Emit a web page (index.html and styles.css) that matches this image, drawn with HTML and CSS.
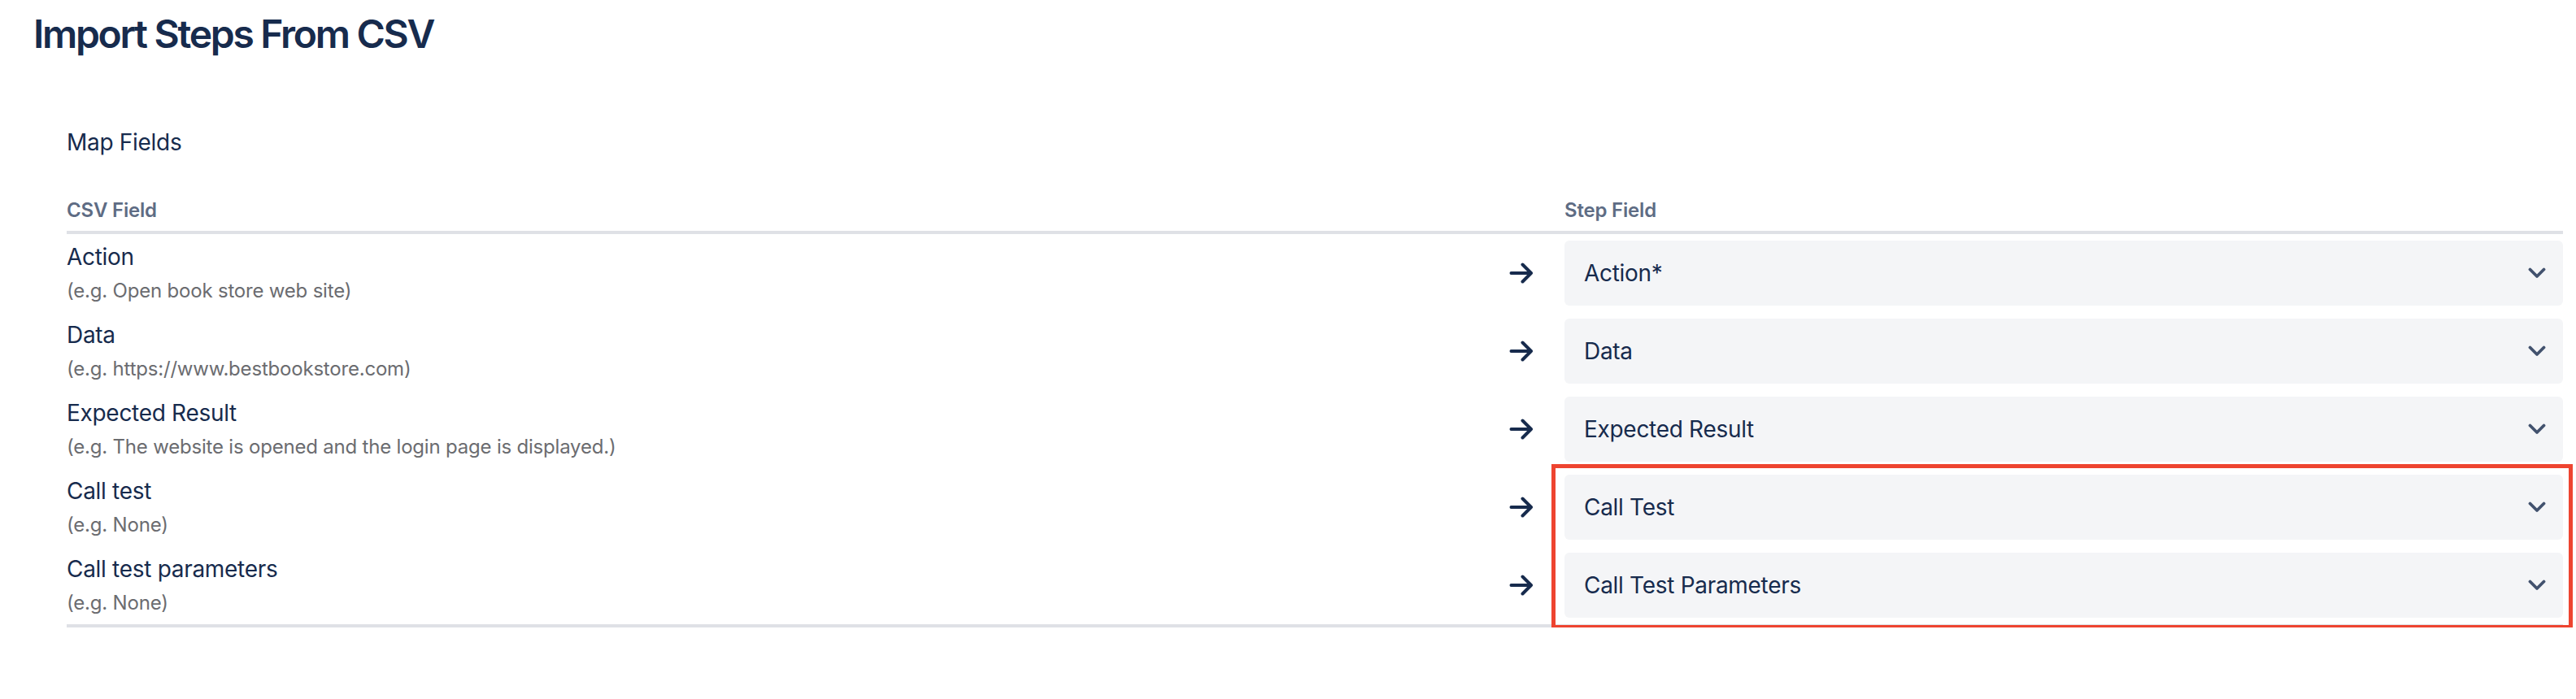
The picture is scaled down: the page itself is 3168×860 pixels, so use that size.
FILE: index.html
```html
<!DOCTYPE html>
<html lang="en">
<head>
<meta charset="utf-8">
<title>Import Steps From CSV</title>
<link rel="stylesheet" href="styles.css">
</head>
<body>
<div class="page">
  <h1 class="title">Import Steps From CSV</h1>
  <section class="mapping">
    <h2 class="section-title">Map Fields</h2>
    <div class="table">
      <div class="thead">
        <div class="th th-csv">CSV Field</div>
        <div class="th th-step">Step Field</div>
      </div>
      <div class="tbody">
        <div class="row">
          <div class="csv"><div class="label">Action</div><div class="hint">(e.g. Open book store web site)</div></div>
          <svg class="arrow" viewBox="0 0 30 26" width="30" height="26"><path d="M2.5 13H27M16.5 2.5L27 13L16.5 23.5"/></svg>
          <div class="select"><span class="value">Action*</span><svg class="chevron" viewBox="0 0 22 14" width="22" height="14"><path d="M2.5 2.5L11 11L19.5 2.5"/></svg></div>
        </div>
        <div class="row">
          <div class="csv"><div class="label">Data</div><div class="hint">(e.g. https://www.bestbookstore.com)</div></div>
          <svg class="arrow" viewBox="0 0 30 26" width="30" height="26"><path d="M2.5 13H27M16.5 2.5L27 13L16.5 23.5"/></svg>
          <div class="select"><span class="value">Data</span><svg class="chevron" viewBox="0 0 22 14" width="22" height="14"><path d="M2.5 2.5L11 11L19.5 2.5"/></svg></div>
        </div>
        <div class="row">
          <div class="csv"><div class="label">Expected Result</div><div class="hint">(e.g. The website is opened and the login page is displayed.)</div></div>
          <svg class="arrow" viewBox="0 0 30 26" width="30" height="26"><path d="M2.5 13H27M16.5 2.5L27 13L16.5 23.5"/></svg>
          <div class="select"><span class="value">Expected Result</span><svg class="chevron" viewBox="0 0 22 14" width="22" height="14"><path d="M2.5 2.5L11 11L19.5 2.5"/></svg></div>
        </div>
        <div class="group">
          <div class="row">
            <div class="csv"><div class="label">Call test</div><div class="hint">(e.g. None)</div></div>
            <svg class="arrow" viewBox="0 0 30 26" width="30" height="26"><path d="M2.5 13H27M16.5 2.5L27 13L16.5 23.5"/></svg>
            <div class="select"><span class="value">Call Test</span><svg class="chevron" viewBox="0 0 22 14" width="22" height="14"><path d="M2.5 2.5L11 11L19.5 2.5"/></svg></div>
          </div>
          <div class="row">
            <div class="csv"><div class="label">Call test parameters</div><div class="hint">(e.g. None)</div></div>
            <svg class="arrow" viewBox="0 0 30 26" width="30" height="26"><path d="M2.5 13H27M16.5 2.5L27 13L16.5 23.5"/></svg>
            <div class="select"><span class="value">Call Test Parameters</span><svg class="chevron" viewBox="0 0 22 14" width="22" height="14"><path d="M2.5 2.5L11 11L19.5 2.5"/></svg></div>
          </div>
          <div class="highlight"></div>
        </div>
      </div>
    </div>
  </section>
</div>
</body>
</html>
```

FILE: styles.css
```css
html, body {
  margin: 0;
  padding: 0;
  background: #ffffff;
}

body {
  font-family: Inter, "Noto Sans", "Liberation Sans", sans-serif;
  color: #172b4d;
}

.page {
  padding: 14px 16px 0 41px;
}

.title {
  margin: 0;
  font-size: 48px;
  line-height: 56px;
  font-weight: 600;
  letter-spacing: -2.3px;
  color: #172b4d;
}

.mapping {
  margin-left: 41px;
  margin-top: 85px;
}

.section-title {
  margin: 0;
  font-size: 28px;
  line-height: 40px;
  font-weight: 400;
  letter-spacing: -0.3px;
  color: #172b4d;
}

.table {
  margin-top: 48px;
}

.thead {
  display: flex;
  padding-bottom: 9px;
  border-bottom: 4px solid #dfe1e6;
}

.th {
  font-size: 24px;
  line-height: 32px;
  font-weight: 600;
  color: #5e6c84;
  letter-spacing: -0.2px;
}

.th-csv {
  flex: 1;
}

.th-step {
  width: 1228px;
}

.tbody {
  border-bottom: 4px solid #dfe1e6;
}

.row {
  display: flex;
  align-items: center;
  padding: 8px 0;
}

.csv {
  flex: 1;
  min-width: 0;
}

.label {
  font-size: 28px;
  line-height: 40px;
  color: #172b4d;
  letter-spacing: -0.3px;
}

.hint {
  font-size: 24px;
  line-height: 36px;
  padding-top: 4px;
  color: #6b6c70;
  letter-spacing: -0.2px;
}

.arrow {
  flex: none;
  margin-right: 38px;
  fill: none;
  stroke: #172b4d;
  stroke-width: 4;
  stroke-linecap: round;
  stroke-linejoin: round;
}

.select {
  flex: none;
  width: 1228px;
  height: 80px;
  box-sizing: border-box;
  padding: 0 21px 0 24px;
  display: flex;
  align-items: center;
  justify-content: space-between;
  background: #f4f5f7;
  border-radius: 6px;
}

.value {
  font-size: 28px;
  line-height: 40px;
  color: #172b4d;
  letter-spacing: -0.3px;
}

.chevron {
  flex: none;
  fill: none;
  stroke: #42526e;
  stroke-width: 3.8;
  stroke-linecap: round;
  stroke-linejoin: round;
}

.group {
  position: relative;
}

.highlight {
  position: absolute;
  top: -5px;
  bottom: -6px;
  left: 1826px;
  right: -12px;
  border: 5px solid #ee4430;
  pointer-events: none;
}
```
